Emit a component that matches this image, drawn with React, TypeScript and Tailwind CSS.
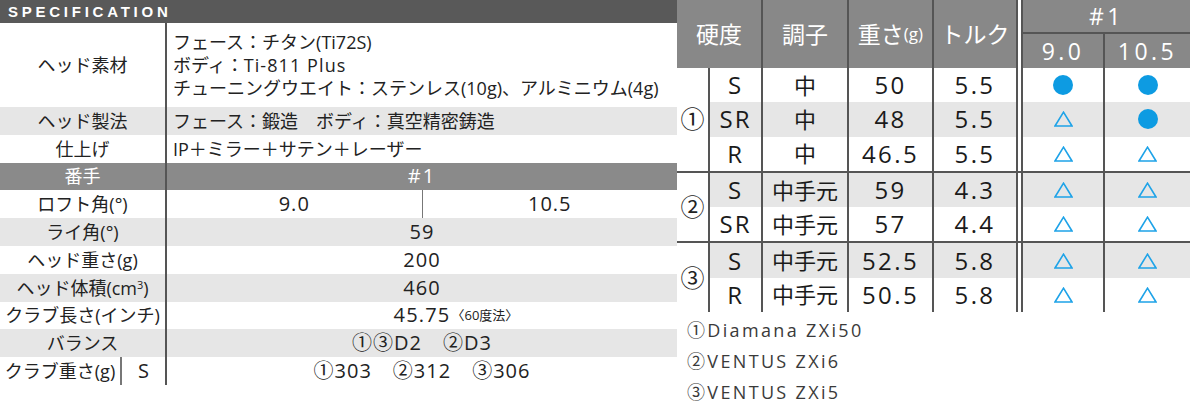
import React from "react";

const line = "border-[#555]";

function Row({
    label,
    bg = "bg-white",
    h = "h-[27.8px]",
    children,
}: {
    label: React.ReactNode;
    bg?: string;
    h?: string;
    children: React.ReactNode;
}) {
    return (
        <div className={`flex ${bg} ${h}`}>
            <div className={`w-[167px] shrink-0 border-r-2 ${line} flex items-center justify-center`}>
                {label}
            </div>
            <div className="flex-1 flex items-center">{children}</div>
        </div>
    );
}

// numbers in the spec table run a little larger than the kana
function Num({ children }: { children: React.ReactNode }) {
    return <span className="w-full text-center text-[20px] tracking-[0.05em]">{children}</span>;
}

function Circle() {
    return <span className="block w-[20px] h-[20px] rounded-full bg-[#0d9be2]" />;
}

function Triangle() {
    return (
        <svg width="19" height="16" viewBox="0 0 19 16">
            <path d="M9.5 1.2 L18 15 L1 15 Z" fill="none" stroke="#1ea3e8" strokeWidth="1.6" />
        </svg>
    );
}

type Body = { flex: string; tune: string; weight: string; torque: string; a: "o" | "t"; b: "o" | "t"; gray: boolean };

const groups: { mark: string; rows: Body[] }[] = [
    {
        mark: "①",
        rows: [
            { flex: "S", tune: "中", weight: "50", torque: "5.5", a: "o", b: "o", gray: false },
            { flex: "SR", tune: "中", weight: "48", torque: "5.5", a: "t", b: "o", gray: true },
            { flex: "R", tune: "中", weight: "46.5", torque: "5.5", a: "t", b: "t", gray: false },
        ],
    },
    {
        mark: "②",
        rows: [
            { flex: "S", tune: "中手元", weight: "59", torque: "4.3", a: "t", b: "t", gray: true },
            { flex: "SR", tune: "中手元", weight: "57", torque: "4.4", a: "t", b: "t", gray: false },
        ],
    },
    {
        mark: "③",
        rows: [
            { flex: "S", tune: "中手元", weight: "52.5", torque: "5.8", a: "t", b: "t", gray: true },
            { flex: "R", tune: "中手元", weight: "50.5", torque: "5.8", a: "t", b: "t", gray: false },
        ],
    },
];

function SpecTable() {
    return (
        <div className="w-[677px] shrink-0 text-[18px] text-[#222] leading-none">
            <div className="h-[23px] bg-[#595959] pl-[8px] flex items-center">
                <span className="font-['Liberation_Sans',sans-serif] font-bold text-[15px] tracking-[0.25em] text-white">
                    SPECIFICATION
                </span>
            </div>
            <Row label="ヘッド素材" h="h-[84px]">
                <div className="pl-[6px] leading-[23px]">
                    <div>フェース：チタン(Ti72S)</div>
                    <div>
                        ボディ：<span className="tracking-[0.06em]">Ti-811 Plus</span>
                    </div>
                    <div>チューニングウエイト：ステンレス(10g)、アルミニウム(4g)</div>
                </div>
            </Row>
            <Row label="ヘッド製法" bg="bg-[#e6e6e6]">
                <span className="pl-[6px]">フェース：鍛造　ボディ：真空精密鋳造</span>
            </Row>
            <Row label="仕上げ">
                <span className="pl-[6px]">IP＋ミラー＋サテン＋レーザー</span>
            </Row>
            <Row label={<span className="text-white">番手</span>} bg="bg-[#8a8a8a]">
                <span className="w-full text-center text-white text-[20px] tracking-[0.1em]">#1</span>
            </Row>
            <Row label="ロフト角(°)">
                <div className="flex w-full h-full text-[20px] tracking-[0.05em]">
                    <div className="flex-1 flex items-center justify-center border-r border-[#777]">9.0</div>
                    <div className="flex-1 flex items-center justify-center">10.5</div>
                </div>
            </Row>
            <Row label="ライ角(°)" bg="bg-[#e6e6e6]">
                <Num>59</Num>
            </Row>
            <Row label="ヘッド重さ(g)">
                <Num>200</Num>
            </Row>
            <Row
                label={
                    <span>
                        ヘッド体積(cm<sup className="text-[11px]">3</sup>)
                    </span>
                }
                bg="bg-[#e6e6e6]"
            >
                <Num>460</Num>
            </Row>
            <Row label="クラブ長さ(インチ)">
                <div className="grid grid-cols-[1fr_auto_1fr] items-center w-full">
                    <span />
                    <span className="text-[20px] tracking-[0.06em]">45.75</span>
                    <span className="text-[13px] pl-[1px]">〈60度法〉</span>
                </div>
            </Row>
            <Row label="バランス" bg="bg-[#e6e6e6]">
                <Num>①③D2　②D3</Num>
            </Row>
            <Row
                label={
                    <div className="flex w-full h-full">
                        <div className="w-[122px] border-r-2 border-[#777] flex items-center justify-center">
                            クラブ重さ(g)
                        </div>
                        <div className="flex-1 flex items-center justify-center text-[20px]">S</div>
                    </div>
                }
            >
                <Num>①303　②312　③306</Num>
            </Row>
        </div>
    );
}

function ShaftTable() {
    const cell = `h-full flex items-center justify-center border-r-2 ${line}`;
    return (
        <div className="flex-1">
            <div className="flex h-[68px] bg-[#888] text-white text-[23px]">
                <div className={`w-[86px] ${cell}`}>硬度</div>
                <div className={`w-[86px] ${cell}`}>調子</div>
                <div className={`w-[85px] ${cell}`}>
                    重さ<span className="text-[17px]">(g)</span>
                </div>
                <div className={`w-[84px] ${cell}`}>トルク</div>
                <div className="w-[3px] bg-white" />
                <div className={`flex-1 border-l-2 ${line} flex flex-col`}>
                    <div className={`h-[34px] border-b-2 ${line} flex items-center justify-center tracking-[0.15em]`}>
                        #1
                    </div>
                    <div className="flex flex-1 tracking-[0.15em]">
                        <div className={`w-[82px] ${cell}`}>9.0</div>
                        <div className="flex-1 flex items-center justify-center">10.5</div>
                    </div>
                </div>
            </div>
            {groups.map((g, gi) => (
                <div key={gi} className={`flex ${gi > 0 ? `border-t-2 ${line}` : ""}`}>
                    <div className={`w-[33px] shrink-0 border-r-2 ${line} flex items-center justify-center text-[24px] text-[#222]`}>
                        {g.mark}
                    </div>
                    <div className="flex-1">
                        {g.rows.map((r, ri) => (
                            <div
                                key={ri}
                                className={`flex h-[34.3px] text-[24px] text-[#1a1a1a] ${r.gray ? "bg-[#e6e6e6]" : "bg-white"}`}
                            >
                                <div className={`w-[53px] ${cell} tracking-[0.08em]`}>{r.flex}</div>
                                <div className={`w-[86px] ${cell} text-[22px]`}>{r.tune}</div>
                                <div className={`w-[85px] ${cell} tracking-[0.1em]`}>{r.weight}</div>
                                <div className={`w-[84px] ${cell} tracking-[0.1em]`}>{r.torque}</div>
                                <div className="w-[3px] bg-white" />
                                <div className={`w-[84px] border-l-2 ${cell}`}>
                                    {r.a === "o" ? <Circle /> : <Triangle />}
                                </div>
                                <div className="flex-1 flex items-center justify-center">
                                    {r.b === "o" ? <Circle /> : <Triangle />}
                                </div>
                            </div>
                        ))}
                    </div>
                </div>
            ))}
            <div className="mt-[3px] pl-[10px] text-[18px] leading-[31px] tracking-[0.13em] text-[#3a3a3a]">
                <div>①Diamana ZXi50</div>
                <div>②VENTUS ZXi6</div>
                <div>③VENTUS ZXi5</div>
            </div>
        </div>
    );
}

export default function App() {
    return (
        <div className="w-[1190px] h-[407px] bg-white flex font-['Open_Sans','Noto_Sans_CJK_JP',sans-serif] overflow-hidden">
            <SpecTable />
            <ShaftTable />
        </div>
    );
}
